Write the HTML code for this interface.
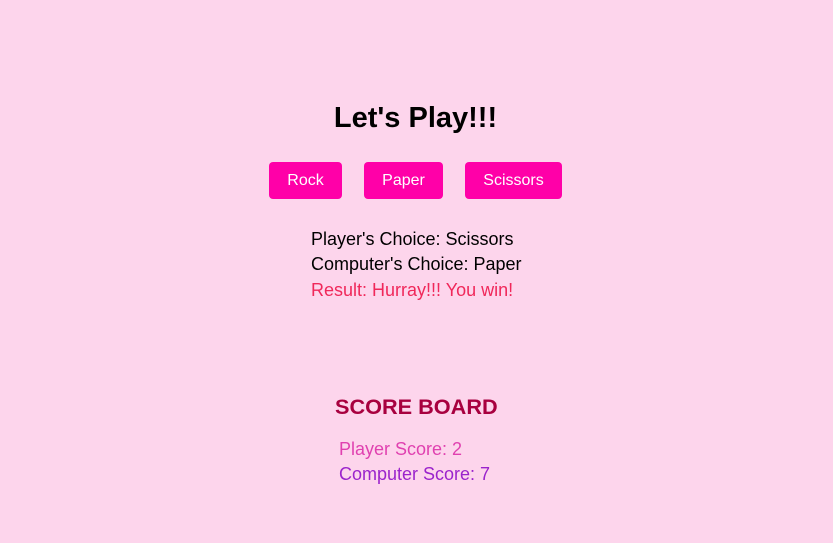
<!DOCTYPE html>
<html><head><style>
body{margin:0;background:#fdd5ec;font-family:"Liberation Sans",sans-serif;width:833px;height:543px;position:relative;overflow:hidden}
.a{position:absolute;white-space:nowrap}
h1{position:absolute;left:0;width:831px;text-align:center;top:101px;margin:0;font-size:29px;font-weight:bold;line-height:34px;color:#000;}
.b{position:absolute;top:162px;height:37px;background:#ff00a8;color:#fff;border-radius:4px;font-size:16px;line-height:37px;text-align:center}
.t{font-size:18px;line-height:22px}
</style></head><body>
<h1>Let's Play!!!</h1>
<div class="b" style="left:269px;width:73px">Rock</div>
<div class="b" style="left:364px;width:79px">Paper</div>
<div class="b" style="left:465px;width:97px">Scissors</div>
<div class="a t" style="left:311px;top:228px;color:#000">Player's Choice: Scissors</div>
<div class="a t" style="left:311px;top:253px;color:#000">Computer's Choice: Paper</div>
<div class="a t" style="left:311px;top:279px;color:#f0285a">Result: Hurray!!! You win!</div>
<div class="a" style="left:335px;top:395px;font-size:21.7px;font-weight:bold;line-height:24px;color:#a8003f">SCORE BOARD</div>
<div class="a t" style="left:339px;top:438px;color:#e041b0">Player Score: 2</div>
<div class="a t" style="left:339px;top:463px;color:#9b23cc">Computer Score: 7</div>
</body></html>
